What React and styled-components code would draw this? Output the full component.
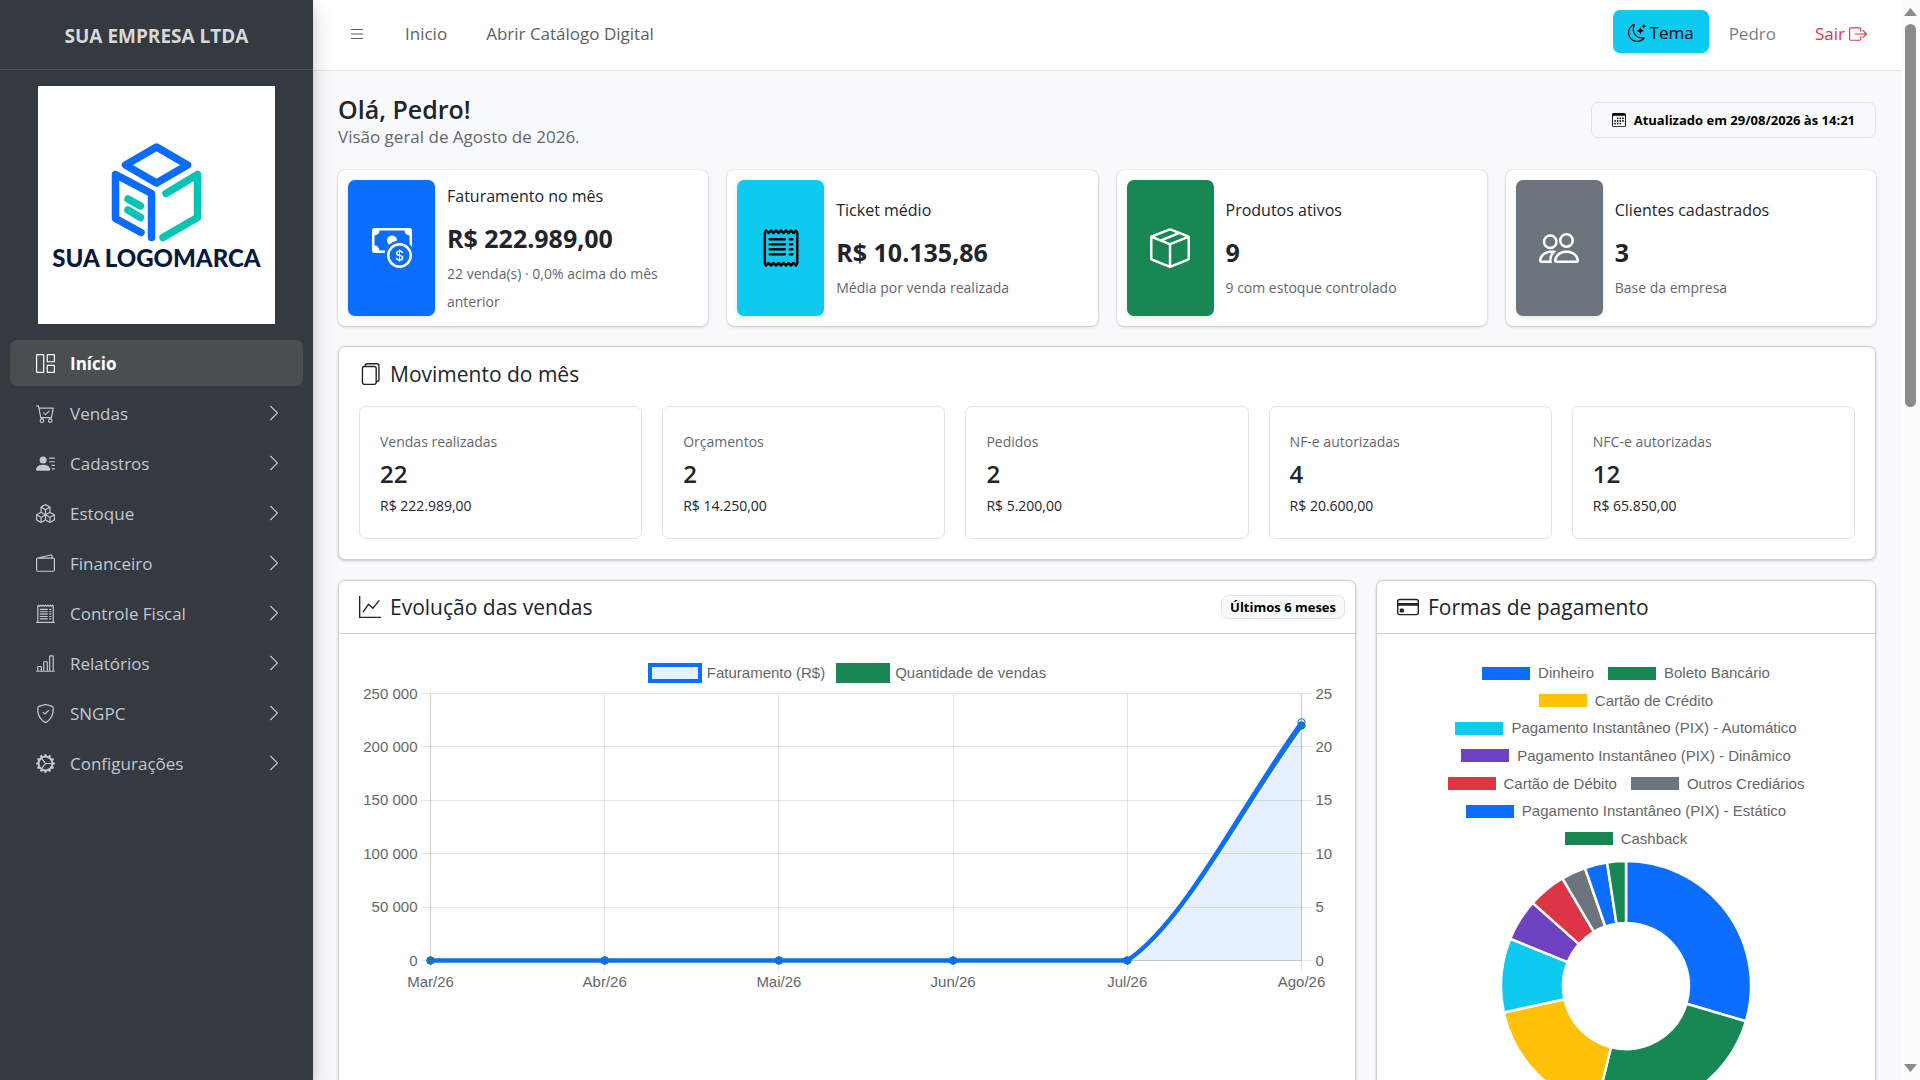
import React from "react";
import styled, { createGlobalStyle } from "styled-components";
import {
  BsGrid1X2, BsCartCheck, BsPersonLinesFill, BsBoxes, BsWallet2, BsReceiptCutoff,
  BsBarChartLine, BsShieldCheck, BsGearWideConnected, BsChevronRight, BsList,
  BsMoonStars, BsBoxArrowRight, BsCalendar3, BsCashCoin, BsReceipt, BsBoxSeam,
  BsPeople, BsFiles, BsGraphUp, BsCreditCard,
} from "react-icons/bs";

const GlobalStyle = createGlobalStyle`
  *, *::before, *::after { box-sizing: border-box; }
  body {
    margin: 0;
    background: #f8f9fa;
    color: #212529;
    font-family: "Segoe UI", "Open Sans", "Noto Sans", sans-serif;
    font-size: 17px;
    line-height: 28px;
  }
  h1, h2, p, ul { margin: 0; padding: 0; }
  ul { list-style: none; }
  a { color: inherit; text-decoration: none; }
  button { font: inherit; border: 0; cursor: pointer; }
  svg { display: block; flex: none; }
`;

const Shell = styled.div`
  display: flex;
  height: 100vh;
  overflow: hidden;
`;

const Sidebar = styled.aside`
  flex: 0 0 313px;
  display: flex;
  flex-direction: column;
  background: #343a40;
  color: #c2c7d0;
  box-shadow: 0 10px 20px rgba(0, 0, 0, 0.19), 0 6px 6px rgba(0, 0, 0, 0.1);
  z-index: 2;
`;

const Brand = styled.a`
  display: flex;
  align-items: center;
  justify-content: center;
  height: 70px;
  padding-top: 2px;
  border-bottom: 1px solid #4b545c;
  color: #d6d8da;
  font-size: 19px;
  font-weight: 700;
`;

const LogoBox = styled.div`
  margin: 16px 38px;
  background: #fff;

  svg { width: 100%; height: auto; }
  text {
    font-family: Lato, sans-serif;
    font-size: 24px;
    font-weight: 900;
    fill: #071a3d;
  }
`;

const Menu = styled.ul`
  display: flex;
  flex-direction: column;
  gap: 4px;
  padding: 0 10px;
`;

const MenuLink = styled.a`
  display: flex;
  align-items: center;
  gap: 15px;
  height: 46px;
  padding: 0 20px 0 26px;
  border-radius: 7px;
  background: ${(p) => (p.$active ? "#494e51" : "transparent")};
  color: ${(p) => (p.$active ? "#fff" : "inherit")};
  font-weight: ${(p) => (p.$active ? 700 : 400)};

  span { flex: 1; padding-top: 2px; }
`;

const Main = styled.div`
  flex: 1;
  min-width: 0;
  display: flex;
  flex-direction: column;
`;

const Topbar = styled.header`
  flex: none;
  display: flex;
  align-items: center;
  justify-content: space-between;
  height: 71px;
  padding: 0 34px 3px 35px;
  border-bottom: 1px solid #dee2e6;
  background: #fff;
  color: #5d5f61;
`;

const TopGroup = styled.nav`
  display: flex;
  align-items: center;
  gap: ${(p) => p.$gap}px;
`;

const IconButton = styled.button`
  padding: 0;
  background: none;
  color: inherit;
`;

const ThemeButton = styled.button`
  display: flex;
  align-items: center;
  gap: 4px;
  height: 43px;
  margin-bottom: 4px;
  padding: 2px 15px 0;
  border-radius: 7px;
  background: #0dcaf0;
  color: #000;
`;

const UserGroup = styled.div`
  display: flex;
  align-items: center;
  gap: 39px;
`;

const UserLink = styled.a`
  color: #7b8086;
`;

const ExitLink = styled.a`
  display: flex;
  align-items: center;
  gap: 4px;
  color: #dc3545;
`;

const Content = styled.main`
  flex: 1;
  min-height: 0;
  overflow: hidden;
  display: flex;
  flex-direction: column;
  gap: 20px;
  padding: 24px 25px 0;

  > * { flex: none; }
`;

const PageHead = styled.div`
  display: flex;
  align-items: flex-start;
  justify-content: space-between;
  height: 55px;
`;

const Title = styled.h1`
  font-size: 25px;
  font-weight: 600;
  line-height: 28px;
`;

const Muted = styled.p`
  color: #63676b;
`;

const Stamp = styled.div`
  display: flex;
  align-items: center;
  gap: 8px;
  height: 36px;
  margin-top: 7px;
  padding: 0 20px;
  border: 1px solid #dee2e6;
  border-radius: 7px;
  color: #000;
  font-size: 13px;
  font-weight: 700;
`;

const StatGrid = styled.section`
  display: grid;
  grid-template-columns: repeat(4, 1fr);
  gap: 19px;
`;

const StatCard = styled.article`
  display: flex;
  gap: 12px;
  padding: 10px;
  border-radius: 7px;
  background: #fff;
  box-shadow: 0 0 1px rgba(0, 0, 0, 0.2), 0 1px 3px rgba(0, 0, 0, 0.2);
`;

const StatIcon = styled.div`
  flex: 0 0 87px;
  display: flex;
  align-items: center;
  justify-content: center;
  min-height: 136px;
  border-radius: 7px;
  background: ${(p) => p.$bg};
  color: ${(p) => p.$fg};
  box-shadow: 0 2px 4px rgba(0, 0, 0, 0.1);
`;

const StatText = styled.div`
  display: flex;
  flex-direction: column;
  justify-content: center;
  padding-top: 2px;
`;

const StatLabel = styled.span`
  font-size: 16px;
`;

const StatValue = styled.strong`
  padding-top: 6px;
  font-size: 25px;
  line-height: 44px;
`;

const Small = styled.span`
  color: ${(p) => (p.$dark ? "#212529" : "#63676b")};
  font-size: 14px;
`;

const Panel = styled.section`
  min-width: 0;
  border: 1px solid #cfd0d1;
  border-radius: 7px;
  background: #fff;
  box-shadow: 0 1px 3px rgba(0, 0, 0, 0.2);
`;

const PanelHead = styled.header`
  display: flex;
  align-items: center;
  justify-content: space-between;
  height: 53px;
  padding: 0 10px 0 20px;
  border-bottom: ${(p) => (p.$plain ? "0" : "1px solid #cfd0d1")};
`;

const PanelTitle = styled.h2`
  display: flex;
  align-items: center;
  gap: 9px;
  font-size: 21px;
  font-weight: 400;
`;

const Chip = styled.span`
  padding: 0 8px;
  border: 1px solid #dee2e6;
  border-radius: 7px;
  background: #f8f9fa;
  color: #000;
  font-size: 13px;
  font-weight: 700;
  line-height: 22px;
`;

const TileGrid = styled.div`
  display: grid;
  grid-template-columns: repeat(5, 1fr);
  gap: 20px;
  padding: 6px 20px 20px;
`;

const Tile = styled.article`
  display: flex;
  flex-direction: column;
  padding: 21px 20px 18px;
  border: 1px solid #dee2e6;
  border-radius: 7px;
`;

const TileValue = styled.strong`
  font-size: 24px;
  font-weight: 600;
  line-height: 36px;
`;

const ChartRow = styled.div`
  display: grid;
  grid-template-columns: minmax(0, 1018fr) minmax(0, 500fr);
  gap: 20px;
`;

const LineLegend = styled.ul`
  display: flex;
  justify-content: center;
  gap: 11px;
  padding-top: 29px;
`;

const LegendItem = styled.li`
  display: flex;
  align-items: center;
  gap: ${(p) => p.$gap}px;
  color: #666;
  font-family: "Liberation Sans", Arial, sans-serif;
  font-size: 15px;
  line-height: 20px;
`;

const Swatch = styled.i`
  width: ${(p) => (p.$large ? 54 : 48)}px;
  height: ${(p) => (p.$large ? 20 : 13)}px;
  background: ${(p) => p.$fill};
  border: ${(p) => (p.$stroke ? `4px solid ${p.$stroke}` : "0")};
`;

const LineChartSvg = styled.svg`
  width: 100%;
  height: auto;

  text {
    font-family: "Liberation Sans", Arial, sans-serif;
    font-size: 15px;
    fill: #666;
  }
`;

const PieLegend = styled.ul`
  display: flex;
  flex-direction: column;
  justify-content: space-between;
  height: 186px;
  margin: 29px 0 11px;
`;

const PieLegendRow = styled.li`
  ul { display: flex; justify-content: center; gap: 14px; }
`;

const DonutSvg = styled.svg`
  width: 252px;
  height: 252px;
  margin: 0 auto 20px;
`;

const Scrollbar = styled.div`
  flex: 0 0 19px;
  display: flex;
  flex-direction: column;
  align-items: center;
  padding: 8px 0;
  background: #fcfcfc;
`;

const Thumb = styled.div`
  width: 11px;
  height: 36%;
  margin: 8px 0 auto;
  border-radius: 6px;
  background: #8b8b8b;
`;

const MENU = [
  ["Início", BsGrid1X2], ["Vendas", BsCartCheck], ["Cadastros", BsPersonLinesFill],
  ["Estoque", BsBoxes], ["Financeiro", BsWallet2], ["Controle Fiscal", BsReceiptCutoff],
  ["Relatórios", BsBarChartLine], ["SNGPC", BsShieldCheck], ["Configurações", BsGearWideConnected],
];

const STATS = [
  ["Faturamento no mês", "R$ 222.989,00", "22 venda(s) · 0,0% acima do mês anterior", BsCashCoin, "#0d6efd", "#fff"],
  ["Ticket médio", "R$ 10.135,86", "Média por venda realizada", BsReceipt, "#0dcaf0", "#000"],
  ["Produtos ativos", "9", "9 com estoque controlado", BsBoxSeam, "#198754", "#fff"],
  ["Clientes cadastrados", "3", "Base da empresa", BsPeople, "#6c757d", "#fff"],
];

const TILES = [
  ["Vendas realizadas", "22", "R$ 222.989,00"],
  ["Orçamentos", "2", "R$ 14.250,00"],
  ["Pedidos", "2", "R$ 5.200,00"],
  ["NF-e autorizadas", "4", "R$ 20.600,00"],
  ["NFC-e autorizadas", "12", "R$ 65.850,00"],
];

const PIE_ROWS = [
  [["Dinheiro", "#0d6efd"], ["Boleto Bancário", "#198754"]],
  [["Cartão de Crédito", "#ffc107"]],
  [["Pagamento Instantâneo (PIX) - Automático", "#0dcaf0"]],
  [["Pagamento Instantâneo (PIX) - Dinâmico", "#6f42c1"]],
  [["Cartão de Débito", "#dc3545"], ["Outros Crediários", "#6c757d"]],
  [["Pagamento Instantâneo (PIX) - Estático", "#0d6efd"]],
  [["Cashback", "#198754"]],
];

const SLICES = [
  [0, 106.4, "#0d6efd"], [106.4, 193.8, "#198754"], [193.8, 257.8, "#ffc107"],
  [257.8, 292.2, "#0dcaf0"], [292.2, 311.7, "#6f42c1"], [311.7, 329.4, "#dc3545"],
  [329.4, 340.8, "#6c757d"], [340.8, 351.3, "#0d6efd"], [351.3, 360, "#198754"],
];

function Logo() {
  return (
    <LogoBox>
      <svg viewBox="0 0 237 238" role="img" aria-label="Sua Logomarca">
        <g fill="none" strokeWidth="7.5" strokeLinecap="round" strokeLinejoin="round">
          <g stroke="#0a6bff">
            <path d="M118.5 61 149.5 79 118.5 97 87.5 79Z" />
            <path d="M103 146.500 77.500 132.500V88.500L113.500 107.500V151.500" />
          </g>
          <g stroke="#04c4b4">
            <path d="M128 107.500 159.500 88.500V131.500L125 151.500" />
            <path d="M90 113 102.500 120M90 124 102.500 131.500" />
          </g>
        </g>
        <text x="118.500" y="181" textAnchor="middle">SUA LOGOMARCA</text>
      </svg>
    </LogoBox>
  );
}

function LineChart() {
  const x0 = 91.5, y0 = 277.5, dx = 174.2, dy = 53.4;
  const months = ["Mar/26", "Abr/26", "Mai/26", "Jun/26", "Jul/26", "Ago/26"];
  const money = ["0", "50 000", "100 000", "150 000", "200 000", "250 000"];
  const right = x0 + 5 * dx, top = y0 - 5 * dy, jul = x0 + 4 * dx;
  const rise = (v) => {
    const h = v * 5 * dy;
    return `C${jul + 58} ${y0 - h * 0.164} ${right - 59} ${y0 - h * 0.66} ${right} ${y0 - h}`;
  };
  const line = (v) => `M${x0} ${y0}H${jul}${rise(v)}`;
  const dots = (v, stroke, fill) => months.map((m, i) => (
    <circle key={m} cx={x0 + i * dx} cy={i === 5 ? y0 - v * 5 * dy : y0} r="3.7" fill={fill} stroke={stroke} />
  ));
  return (
    <LineChartSvg viewBox="0 0 1016 400" role="img" aria-label="Evolução das vendas">
      <g fill="none" stroke="#000" strokeOpacity="0.1" shapeRendering="crispEdges">
        {months.map((m, i) => <path key={m} d={`M${x0 + i * dx} ${top}V${y0 + 10}`} />)}
        {money.map((m, i) => <path key={m} d={`M${x0 - 10} ${y0 - i * dy}H${right + 10}`} />)}
        <path d={`M${x0} ${top}V${y0}H${right}V${top}`} />
      </g>
      <path d={line(0.88)} fill="none" stroke="#198754" strokeWidth="4" />
      {dots(0.88, "#198754", "#198754")}
      <path d={`${line(0.892)}V${y0}Z`} fill="#0d6efd" fillOpacity="0.1" />
      <path d={line(0.892)} fill="none" stroke="#0d6efd" strokeWidth="4" />
      {dots(0.892, "#0d6efd", "rgba(13,110,253,0.1)")}
      {months.map((m, i) => <text key={m} x={x0 + i * dx} y={y0 + 26} textAnchor="middle">{m}</text>)}
      {money.map((m, i) => <text key={m} x={x0 - 13} y={y0 - i * dy + 5} textAnchor="end">{m}</text>)}
      {money.map((m, i) => <text key={m} x={right + 14} y={y0 - i * dy + 5}>{i * 5}</text>)}
    </LineChartSvg>
  );
}

function Donut() {
  const at = (r, deg) => {
    const a = ((deg - 90) * Math.PI) / 180;
    return `${126 + r * Math.cos(a)} ${126 + r * Math.sin(a)}`;
  };
  return (
    <DonutSvg viewBox="0 0 252 252" role="img" aria-label="Formas de pagamento">
      {SLICES.map(([a, b, fill]) => (
        <path
          key={a}
          d={`M${at(125, a)}A125 125 0 0 1 ${at(125, b)}L${at(63, b)}A63 63 0 0 0 ${at(63, a)}Z`}
          fill={fill}
          stroke="#fff"
          strokeWidth="2.5"
          strokeLinejoin="bevel"
        />
      ))}
    </DonutSvg>
  );
}

export default function App() {
  return (
    <Shell>
      <GlobalStyle />
      <Sidebar>
        <Brand href="#">SUA EMPRESA LTDA</Brand>
        <Logo />
        <nav>
          <Menu>
            {MENU.map(([label, Icon], i) => (
              <li key={label}>
                <MenuLink href="#" $active={i === 0}>
                  <Icon size={19} />
                  <span>{label}</span>
                  {i > 0 && <BsChevronRight size={18} />}
                </MenuLink>
              </li>
            ))}
          </Menu>
        </nav>
      </Sidebar>

      <Main>
        <Topbar>
          <TopGroup $gap={39}>
            <IconButton aria-label="Menu"><BsList size={18} /></IconButton>
            <a href="#">Inicio</a>
            <a href="#">Abrir Catálogo Digital</a>
          </TopGroup>
          <TopGroup $gap={20}>
            <ThemeButton><BsMoonStars size={18} />Tema</ThemeButton>
            <UserGroup>
              <UserLink href="#">Pedro</UserLink>
              <ExitLink href="#">Sair<BsBoxArrowRight size={18} /></ExitLink>
            </UserGroup>
          </TopGroup>
        </Topbar>

        <Content>
          <PageHead>
            <div>
              <Title>Olá, Pedro!</Title>
              <Muted>Visão geral de Agosto de 2026.</Muted>
            </div>
            <Stamp><BsCalendar3 size={14} />Atualizado em 29/08/2026 às 14:21</Stamp>
          </PageHead>

          <StatGrid>
            {STATS.map(([label, value, note, Icon, bg, fg]) => (
              <StatCard key={label}>
                <StatIcon $bg={bg} $fg={fg}><Icon size={40} /></StatIcon>
                <StatText>
                  <StatLabel>{label}</StatLabel>
                  <StatValue>{value}</StatValue>
                  <Small>{note}</Small>
                </StatText>
              </StatCard>
            ))}
          </StatGrid>

          <Panel>
            <PanelHead $plain>
              <PanelTitle><BsFiles size={22} />Movimento do mês</PanelTitle>
            </PanelHead>
            <TileGrid>
              {TILES.map(([label, count, total]) => (
                <Tile key={label}>
                  <Small>{label}</Small>
                  <TileValue>{count}</TileValue>
                  <Small $dark>{total}</Small>
                </Tile>
              ))}
            </TileGrid>
          </Panel>

          <ChartRow>
            <Panel>
              <PanelHead>
                <PanelTitle><BsGraphUp size={22} />Evolução das vendas</PanelTitle>
                <Chip>Últimos 6 meses</Chip>
              </PanelHead>
              <LineLegend>
                <LegendItem $gap={5}><Swatch $large $fill="#e7f0ff" $stroke="#0d6efd" />Faturamento (R$)</LegendItem>
                <LegendItem $gap={5}><Swatch $large $fill="#198754" />Quantidade de vendas</LegendItem>
              </LineLegend>
              <LineChart />
            </Panel>
            <Panel>
              <PanelHead>
                <PanelTitle><BsCreditCard size={22} />Formas de pagamento</PanelTitle>
              </PanelHead>
              <PieLegend>
                {PIE_ROWS.map((row) => (
                  <PieLegendRow key={row[0][0]}>
                    <ul>
                      {row.map(([label, color]) => (
                        <LegendItem key={label} $gap={8}><Swatch $fill={color} />{label}</LegendItem>
                      ))}
                    </ul>
                  </PieLegendRow>
                ))}
              </PieLegend>
              <Donut />
            </Panel>
          </ChartRow>
        </Content>
      </Main>

      <Scrollbar aria-hidden="true">
        <svg width="13" height="8" viewBox="0 0 13 8"><path d="M0 8 6.500 0 13 8Z" fill="#8b8b8b" /></svg>
        <Thumb />
        <svg width="13" height="8" viewBox="0 0 13 8"><path d="M0 0 6.500 8 13 0Z" fill="#8b8b8b" /></svg>
      </Scrollbar>
    </Shell>
  );
}
